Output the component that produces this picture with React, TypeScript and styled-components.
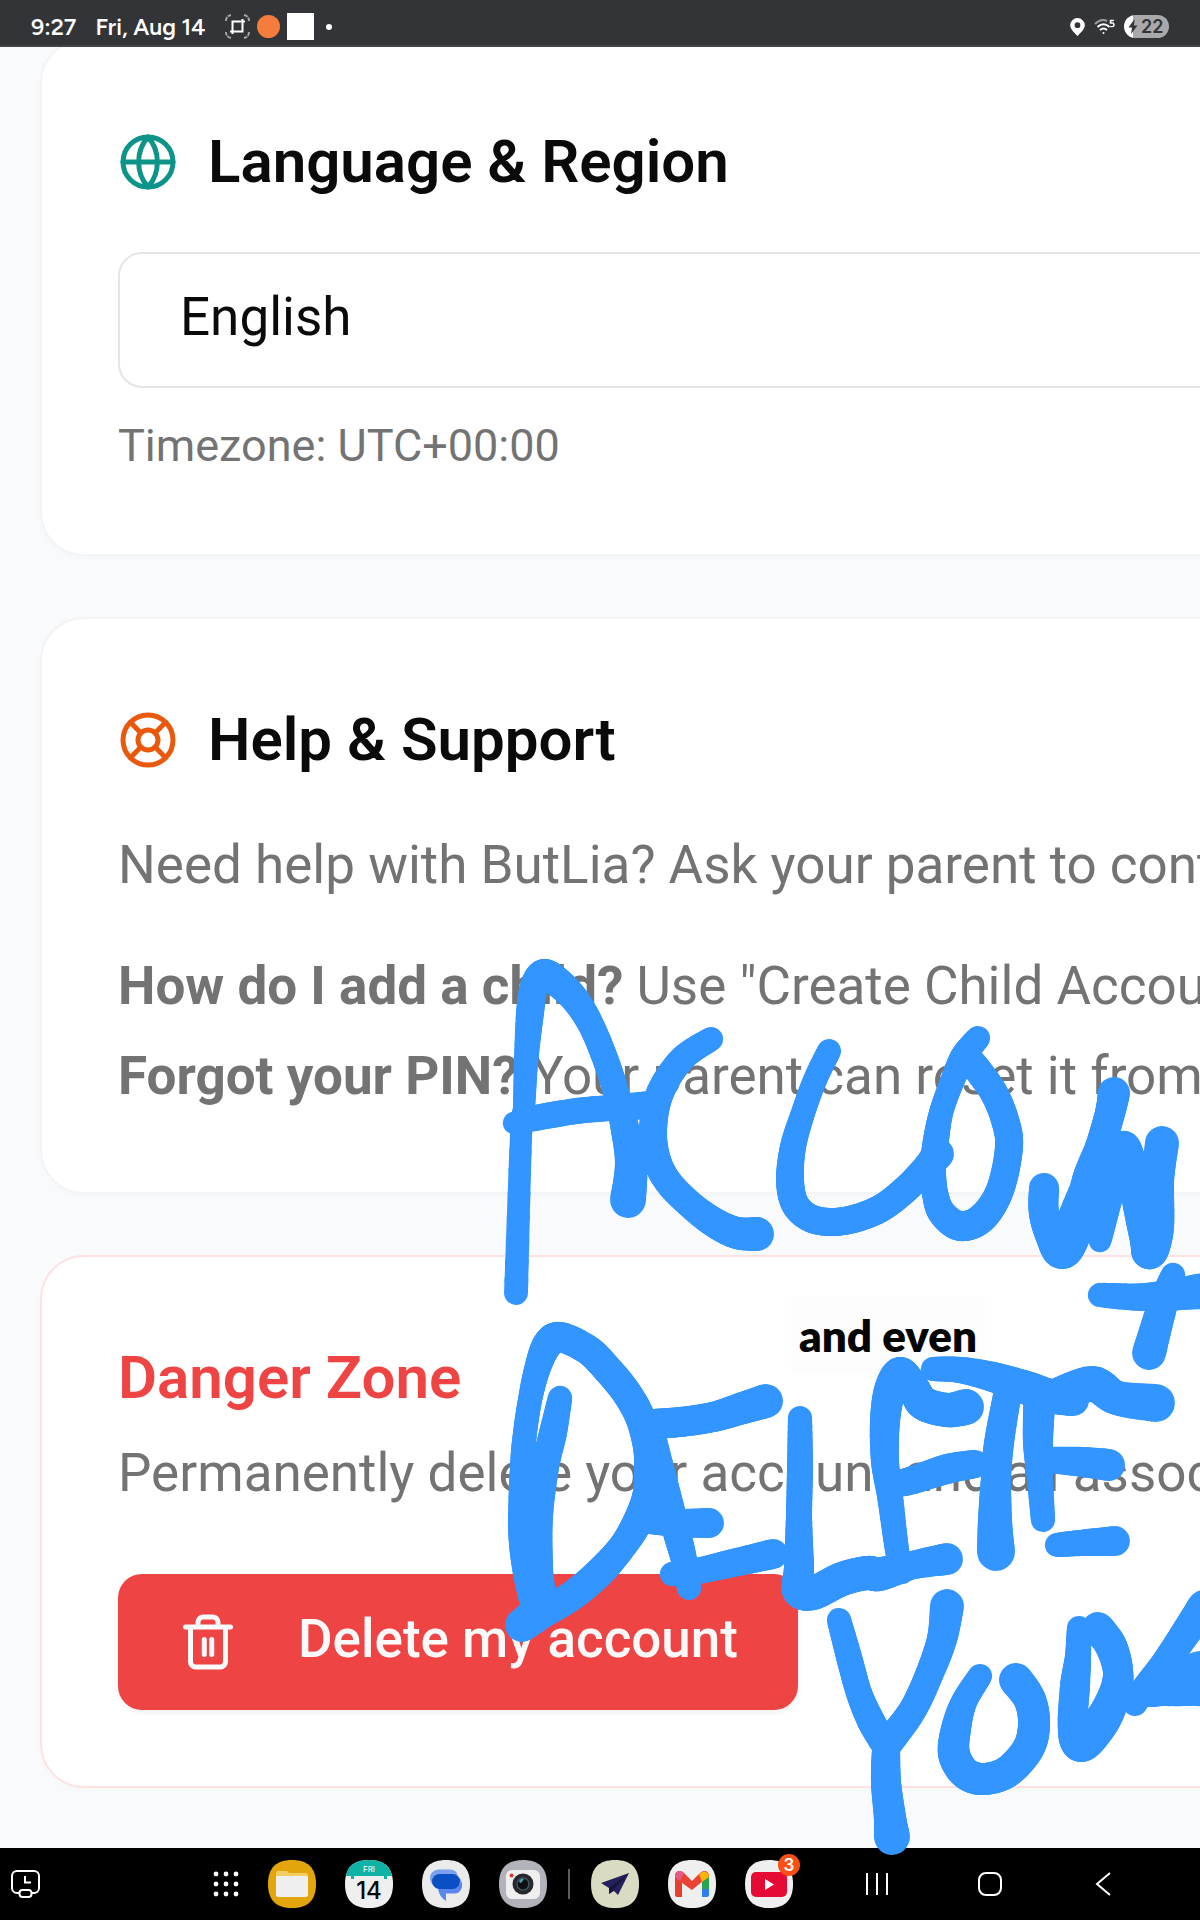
import React from "react";
import styled, { createGlobalStyle } from "styled-components";

const GlobalStyle = createGlobalStyle`
  *, *::before, *::after { box-sizing: border-box; }
  body {
    margin: 0;
    background: #f9fafc;
    color: #0a0a0a;
    font-family: Roboto, "Liberation Sans", sans-serif;
  }
  h2, p { margin: 0; }
`;

const Screen = styled.div`
  position: relative;
  display: flex;
  flex-direction: column;
  min-height: 100vh;
  overflow: hidden;
`;

/* ---------- status bar ---------- */

const StatusBar = styled.header`
  display: flex;
  align-items: center;
  justify-content: space-between;
  height: 47px;
  padding: 8px 31px 0;
  background: #333438;
  border-bottom: 2px solid #434447;
  color: #fff;
  position: relative;
  z-index: 1;
`;

const StatusGroup = styled.div<{ $gap: number }>`
  display: flex;
  align-items: center;
  gap: ${(p) => p.$gap}px;
`;

const StatusText = styled.span`
  font-family: Figtree, Inter, Roboto, sans-serif;
  font-size: 23px;
  line-height: 28px;
  font-weight: 600;
  white-space: nowrap;
`;

const OrangeDot = styled.span`
  width: 23px;
  height: 23px;
  border-radius: 50%;
  background: #f47c3c;
`;

const WhiteSquare = styled.span`
  width: 27px;
  height: 27px;
  background: #fff;
`;

const MoreDot = styled.span`
  width: 6px;
  height: 6px;
  margin-left: 5px;
  border-radius: 50%;
  background: #fff;
`;

const Battery = styled.span`
  display: flex;
  align-items: center;
  gap: 3px;
  height: 23px;
  width: 45px;
  padding-left: 4px;
  border-radius: 12px;
  background: linear-gradient(to right, #fff 9px, #a9a9ac 9px);
  color: #333438;
  font-family: Inter, Roboto, sans-serif;
  font-size: 18px;
  line-height: 23px;
  font-weight: 600;
`;

/* ---------- settings cards ---------- */

const Settings = styled.main`
  flex: 1;
  display: flex;
  flex-direction: column;
  gap: 61px;
  margin-top: -8px;
  margin-right: -120px;
  padding: 0 0 60px 40px;
`;

const Card = styled.section<{ $danger?: boolean }>`
  padding: 76px;
  border: 2px solid ${(p) => (p.$danger ? "#fee2e2" : "#f3f4f6")};
  border-radius: 44px;
  background: #fff;
  box-shadow: 0 2px 6px rgba(0, 0, 0, 0.02);
  white-space: nowrap;
`;

const CardTitle = styled.h2<{ $danger?: boolean }>`
  display: flex;
  align-items: center;
  gap: 30px;
  font-size: 60px;
  line-height: 90px;
  font-weight: 600;
  color: ${(p) => (p.$danger ? "#ef4444" : "#0a0a0a")};
`;

const TitleIcon = styled.svg<{ $color: string }>`
  flex: none;
  width: 60px;
  height: 60px;
  color: ${(p) => p.$color};
`;

const LanguageSelect = styled.select`
  appearance: none;
  display: block;
  width: 100%;
  height: 136px;
  margin: 45px 0 26px;
  padding: 0 60px 6px;
  border: 2px solid #e5e5e5;
  border-radius: 24px;
  background: #fff;
  color: #0a0a0a;
  font-family: inherit;
  font-size: 53px;
  line-height: 80px;
`;

const Hint = styled.p`
  color: #737373;
  font-size: 45px;
  line-height: 64px;
`;

const Body = styled.p<{ $top: number }>`
  margin-top: ${(p) => p.$top}px;
  color: #737373;
  font-size: 53px;
  line-height: 80px;

  strong { font-weight: 700; }
`;

const DeleteButton = styled.button`
  display: flex;
  align-items: center;
  gap: 60px;
  height: 136px;
  margin-top: 61px;
  padding: 0 60px;
  border: 0;
  border-radius: 24px;
  background: #ef4444;
  box-shadow: 0 3px 6px rgba(0, 0, 0, 0.06);
  color: #fafafa;
  font-family: inherit;
  font-size: 53px;
  line-height: 80px;
  font-weight: 500;
`;

const ButtonLabel = styled.span`
  padding-bottom: 6px;
`;

/* ---------- screen annotations ---------- */

const Ink = styled.svg`
  position: absolute;
  z-index: 2;
  top: 0;
  left: 0;
  width: 1200px;
  height: 1920px;
  fill: none;
  stroke: #3395ff;
  stroke-linecap: round;
  pointer-events: none;
`;

const Caption = styled.div`
  position: absolute;
  z-index: 2;
  top: 1296px;
  left: 791px;
  padding: 14px 8px;
  background: #fdfdfd;
  color: #050505;
  font-family: Lato, Roboto, sans-serif;
  font-size: 44px;
  line-height: 50px;
  font-weight: 800;
  white-space: nowrap;
`;

/* ---------- dock ---------- */

const Dock = styled.nav`
  position: relative;
  z-index: 1;
  display: flex;
  align-items: center;
  height: 72px;
  padding: 0 41px 0 10px;
  background: #000;
`;

const Apps = styled.div`
  display: flex;
  align-items: center;
  gap: 29px;
  margin-left: 172px;
`;

const PlainButton = styled.button`
  display: flex;
  align-items: center;
  justify-content: center;
  padding: 0;
  border: 0;
  background: none;
  color: #fff;
`;

const AppButton = styled(PlainButton)`
  position: relative;
  width: 48px;
  height: 48px;
`;

const Divider = styled.span`
  width: 2px;
  height: 30px;
  margin: 0 -8px;
  background: #5c5c5c;
`;

const Badge = styled.span`
  position: absolute;
  top: -6px;
  right: -7px;
  width: 22px;
  height: 22px;
  border-radius: 50%;
  background: #fa5014;
  color: #fff;
  font-family: Inter, Roboto, sans-serif;
  font-size: 17px;
  line-height: 22px;
  font-weight: 600;
  text-align: center;
`;

const Keys = styled.div`
  display: flex;
  margin-left: auto;
`;

const KeyButton = styled(PlainButton)`
  width: 113px;
  height: 48px;
`;

/* ---------- brush drawing ---------- */

type Dab = [x: number, y: number, radius: number];

const mix = (a: number, b: number, c: number, d: number, t: number) =>
  0.5 *
  (2 * b +
    (c - a) * t +
    (2 * a - 5 * b + 4 * c - d) * t * t +
    (3 * b - a - 3 * c + d) * t * t * t);

/* Fills in a smooth run of dabs between those given for a stroke. */
function smooth(dabs: Dab[]): Dab[] {
  const pts: Dab[] = [];
  for (let i = 0; i < dabs.length - 1; i++) {
    const a = dabs[Math.max(0, i - 1)];
    const b = dabs[i];
    const c = dabs[i + 1];
    const d = dabs[Math.min(dabs.length - 1, i + 2)];
    for (let s = 0; s < 8; s++) {
      const t = s / 8;
      pts.push([
        mix(a[0], b[0], c[0], d[0], t),
        mix(a[1], b[1], c[1], d[1], t),
        b[2] + (c[2] - b[2]) * t,
      ]);
    }
  }
  pts.push(dabs[dabs.length - 1]);
  return pts;
}

/* One pen stroke: short round-ended lines whose width follows the pressure. */
const BrushStroke = ({ dabs }: { dabs: Dab[] }) => {
  const pts = smooth(dabs);
  return (
    <g>
      {pts.slice(1).map(([x, y, r], i) => (
        <path
          key={i}
          d={`M${pts[i][0].toFixed(2)} ${pts[i][1].toFixed(2)}L${x.toFixed(2)} ${y.toFixed(2)}`}
          strokeWidth={(pts[i][2] + r).toFixed(2)}
        />
      ))}
    </g>
  );
};

const strokes: Dab[][] = [
  [[516, 1293, 12], [521, 1137, 11], [524, 1107, 11], [526, 1063, 12], [530, 1013, 14], [534, 987, 14], [544, 974, 15], [560, 984, 15], [577, 1002, 14], [592, 1027, 13], [606, 1061, 13], [616, 1092, 13], [624, 1124, 14], [631, 1163, 16], [628, 1200, 18]],
  [[514, 1123, 11], [535, 1118, 13], [577, 1111, 13], [610, 1108, 13], [650, 1105, 14]],
  [[711, 1039, 12], [682, 1059, 13], [660, 1093, 14], [653, 1130, 14], [657, 1160, 14], [669, 1183, 14], [692, 1206, 14], [715, 1223, 15], [737, 1233, 16], [757, 1234, 17]],
  [[829, 1051, 12], [815, 1080, 12], [803, 1113, 12], [793, 1147, 13], [790, 1180, 14], [795, 1204, 14], [810, 1218, 14], [832, 1222, 14], [857, 1218, 14], [883, 1207, 14], [907, 1188, 14], [927, 1167, 14], [938, 1154, 16]],
  [[978, 1038, 12], [963, 1057, 13], [950, 1087, 12], [941, 1113, 12], [936, 1140, 13], [933, 1167, 13], [935, 1193, 13], [942, 1213, 14], [960, 1226, 15], [982, 1218, 15], [1000, 1190, 14], [1009, 1147, 14], [1005, 1120, 14], [994, 1093, 14], [978, 1070, 14], [968, 1056, 12]],
  [[1044, 1188, 15], [1044, 1213, 15], [1053, 1237, 17], [1063, 1250, 19], [1077, 1227, 16], [1087, 1180, 15], [1100, 1147, 15], [1110, 1113, 15], [1114, 1093, 16]],
  [[1063, 1250, 17], [1080, 1200, 15], [1105, 1150, 16]],
  [[1100, 1241, 11], [1107, 1200, 15], [1113, 1167, 17], [1124, 1146, 15], [1133, 1167, 14], [1137, 1200, 15], [1146, 1240, 16], [1150, 1251, 18], [1157, 1227, 17], [1158, 1180, 16], [1162, 1143, 17]],
  [[1100, 1295, 12], [1147, 1297, 14], [1202, 1291, 18]],
  [[1173, 1275, 12], [1162, 1307, 15], [1149, 1353, 17]],
  [[560, 1398, 12], [553, 1433, 14], [545, 1467, 14], [538, 1517, 15], [538, 1567, 15], [540, 1600, 14], [522, 1625, 16]],
  [[533, 1600, 14], [525, 1567, 13], [521, 1527, 13], [522, 1467, 12], [525, 1433, 12], [530, 1400, 12], [537, 1370, 13], [547, 1345, 15], [560, 1337, 15], [588, 1350, 15], [608, 1370, 15], [626, 1392, 15], [640, 1417, 15], [648, 1447, 15], [649, 1473, 15], [647, 1497, 15], [637, 1523, 15], [622, 1547, 14], [600, 1572, 15], [573, 1595, 15], [543, 1613, 15], [522, 1625, 17]],
  [[652, 1433, 13], [665, 1487, 14], [677, 1533, 14], [684, 1560, 13], [689, 1588, 12]],
  [[653, 1424, 15], [680, 1422, 15], [713, 1417, 15], [743, 1408, 16], [766, 1401, 17]],
  [[650, 1521, 13], [680, 1523, 14], [709, 1523, 15]],
  [[672, 1574, 12], [697, 1571, 13], [733, 1563, 14], [773, 1554, 15]],
  [[800, 1418, 12], [800, 1467, 13], [799, 1517, 13], [799, 1567, 15], [798, 1590, 16], [813, 1593, 17], [842, 1579, 17], [867, 1573, 17], [880, 1574, 17], [913, 1565, 14], [947, 1559, 16]],
  [[966, 1407, 18], [947, 1410, 17], [923, 1403, 17], [913, 1386, 15], [900, 1373, 16], [890, 1390, 16], [885, 1421, 15], [885, 1461, 14], [890, 1496, 13], [897, 1550, 12], [902, 1572, 12]],
  [[897, 1484, 13], [913, 1480, 14], [947, 1469, 15], [975, 1464, 14]],
  [[933, 1369, 12], [960, 1370, 13], [993, 1377, 15], [1027, 1388, 17], [1050, 1396, 17], [1073, 1400, 16]],
  [[1007, 1396, 14], [999, 1443, 15], [996, 1479, 15], [995, 1521, 17], [996, 1552, 19]],
  [[1039, 1407, 16], [1038, 1443, 15], [1040, 1479, 13], [1043, 1520, 12]],
  [[1053, 1396, 16], [1092, 1384, 18], [1117, 1398, 17], [1156, 1403, 19]],
  [[1053, 1460, 13], [1083, 1462, 15], [1109, 1465, 16]],
  [[1057, 1545, 12], [1080, 1543, 13], [1115, 1541, 15]],
  [[839, 1620, 12], [849, 1657, 13], [859, 1693, 13], [871, 1721, 14], [884, 1743, 14]],
  [[947, 1606, 17], [942, 1639, 15], [929, 1675, 14], [912, 1711, 14], [888, 1743, 15]],
  [[886, 1750, 14], [886, 1782, 15], [890, 1818, 16], [892, 1837, 18]],
  [[980, 1676, 12], [964, 1702, 13], [956, 1729, 15], [954, 1754, 16], [965, 1773, 16], [983, 1779, 16], [1007, 1772, 16], [1028, 1749, 16], [1034, 1725, 16], [1030, 1700, 16], [1016, 1680, 17]],
  [[1079, 1628, 12], [1078, 1657, 13], [1075, 1686, 15], [1073, 1729, 15], [1082, 1744, 18], [1102, 1721, 18], [1115, 1693, 16], [1118, 1671, 15], [1111, 1646, 16], [1098, 1628, 16]],
  [[1135, 1704, 12], [1144, 1689, 13], [1165, 1663, 14], [1187, 1631, 15], [1204, 1607, 17]],
  [[1144, 1694, 13], [1166, 1690, 15], [1202, 1678, 28]],
];

/* ---------- icons ---------- */

const lineIcon = {
  viewBox: "0 0 24 24",
  fill: "none",
  stroke: "currentColor",
  strokeWidth: 2,
  strokeLinecap: "round" as const,
  strokeLinejoin: "round" as const,
  "aria-hidden": true,
};

const GlobeIcon = () => (
  <TitleIcon {...lineIcon} $color="#0d9488">
    <circle cx="12" cy="12" r="10" />
    <path d="M12 2c-5 5.600-5 14.400 0 20c5-5.600 5-14.400 0-20zM2 12h20" />
  </TitleIcon>
);

const BuoyIcon = () => (
  <TitleIcon {...lineIcon} $color="#ea580c">
    <circle cx="12" cy="12" r="10" />
    <circle cx="12" cy="12" r="4" />
    <path d="m4.930 4.930 4.240 4.240M14.830 9.170l4.240-4.240M14.830 14.830l4.240 4.240M9.170 14.830l-4.240 4.240" />
  </TitleIcon>
);

const TrashIcon = () => (
  <TitleIcon {...lineIcon} $color="#fafafa">
    <path d="M3 6h18M19 6v14c0 1-1 2-2 2H7c-1 0-2-1-2-2V6M8 6V4c0-1 1-2 2-2h4c1 0 2 1 2 2v2M10.500 11v6M13.500 11v6" />
  </TitleIcon>
);

const squircle =
  "M24 0C40 0 48 8 48 24S40 48 24 48S0 40 0 24S8 0 24 0z";

const AppIcon = ({ fill, children }: { fill: string; children: React.ReactNode }) => (
  <svg width="48" height="48" viewBox="0 0 48 48" aria-hidden="true">
    <path d={squircle} fill={fill} />
    {children}
  </svg>
);

const CaptureIcon = () => (
  <svg width="25" height="25" viewBox="0 0 25 25" fill="none" stroke="#fff" strokeWidth="2" aria-hidden="true">
    <path d="M1 7Q1 2 6 1M19 1Q24 2 24 7M24 18Q24 23 19 24M6 24Q1 23 1 18" stroke="#a5a5a8" strokeDasharray="4 1" />
    <path d="M5 17.500h12.500V5M7.500 20V7.500H20" />
  </svg>
);

const PinIcon = () => (
  <svg width="15" height="18" viewBox="0 0 15 18" aria-hidden="true">
    <path fill="#fff" fillRule="evenodd" d="M7.500 0A7.300 7.300 0 0 1 14.800 7.300C14.800 11 11 14.500 7.500 18C4 14.500.2 11 .2 7.300A7.300 7.300 0 0 1 7.500 0zM7.500 4.300a2.900 2.900 0 1 0 0 5.800a2.900 2.900 0 0 0 0-5.800z" />
  </svg>
);

const WifiIcon = () => (
  <svg width="21" height="16" viewBox="0 0 21 16" fill="none" stroke="#fff" strokeWidth="2" aria-hidden="true">
    <path d="M1 5Q7-1 13 2" stroke="#9a9a9d" />
    <path d="M3.500 8Q9.500 2.500 15.500 8M6 11Q9.500 8 13 11" />
    <circle cx="9.500" cy="14" r="1" fill="#fff" stroke="none" />
    <path d="M20 1.500h-3.500v2.500q3.500-.5 3.500 1.800t-3.800 1.700" strokeWidth="1.500" />
  </svg>
);

const BoltIcon = () => (
  <svg width="10" height="15" viewBox="0 0 10 15" aria-hidden="true">
    <path d="M6.500 0L.5 8.500h3.500L3 15l6.500-8.500H6z" fill="#333438" />
  </svg>
);

const CalendarDay = styled.text`
  font-family: Inter, Roboto, sans-serif;
  text-anchor: middle;
`;

export default function App() {
  return (
    <>
      <GlobalStyle />
      <Screen>
        <StatusBar>
          <StatusGroup $gap={19}>
            <StatusText>9:27</StatusText>
            <StatusText>Fri, Aug 14</StatusText>
            <StatusGroup $gap={7}>
              <CaptureIcon />
              <OrangeDot />
              <WhiteSquare />
              <MoreDot />
            </StatusGroup>
          </StatusGroup>
          <StatusGroup $gap={9}>
            <PinIcon />
            <WifiIcon />
            <Battery>
              <BoltIcon />
              22
            </Battery>
          </StatusGroup>
        </StatusBar>

        <Settings>
          <Card>
            <CardTitle>
              <GlobeIcon />
              <label htmlFor="language">Language &amp; Region</label>
            </CardTitle>
            <LanguageSelect id="language" defaultValue="en">
              <option value="en">English</option>
            </LanguageSelect>
            <Hint>Timezone: UTC+00:00</Hint>
          </Card>

          <Card>
            <CardTitle>
              <BuoyIcon />
              Help &amp; Support
            </CardTitle>
            <Body $top={40}>Need help with ButLia? Ask your parent to contact</Body>
            <Body $top={41}>
              <strong>How do I add a child?</strong> Use "Create Child Account"
            </Body>
            <Body $top={10}>
              <strong>Forgot your PIN?</strong> Your parent can reset it from
            </Body>
          </Card>

          <Card $danger>
            <CardTitle $danger>Danger Zone</CardTitle>
            <Body $top={10}>Permanently delete your account and all associated</Body>
            <DeleteButton type="button">
              <TrashIcon />
              <ButtonLabel>Delete my account</ButtonLabel>
            </DeleteButton>
          </Card>
        </Settings>

        <Dock>
          <PlainButton type="button" aria-label="Recent activity">
            <svg width="31" height="30" viewBox="0 0 31 30" fill="none" stroke="#fff" strokeWidth="2" aria-hidden="true">
              <path d="M9 24H7a5 5 0 0 1-5-5V7a5 5 0 0 1 5-5h17a5 5 0 0 1 5 5v12a5 5 0 0 1-5 5h-2" />
              <rect x="9.500" y="21" width="12" height="7" rx="3" />
              <path d="M15 7v6.500h6" />
            </svg>
          </PlainButton>
          <Apps>
            <PlainButton type="button" aria-label="All apps">
              <svg width="26" height="26" viewBox="0 0 26 26" fill="#fff" aria-hidden="true">
                {[3, 13, 23].map((y) => [3, 13, 23].map((x) => <circle key={`${x}-${y}`} cx={x} cy={y} r="2.400" />))}
              </svg>
            </PlainButton>
            <AppButton type="button" aria-label="Files">
              <AppIcon fill="#e2a50c">
                <path d="M8 15v-2q0-2 2-2h9l2 2h17q2 0 2 2v6H8z" fill="#f2cd62" />
                <rect x="8" y="16" width="32" height="21" rx="2" fill="#efefef" />
              </AppIcon>
            </AppButton>
            <AppButton type="button" aria-label="Calendar">
              <AppIcon fill="#efefef">
                <path d="M1 16C3 5 10 0 24 0S45 5 47 16h-5v3h-3v-3H9v3H6v-3z" fill="#0fb3a6" />
                <CalendarDay x="24" y="12" fontSize="8" fill="#fff">FRI</CalendarDay>
                <CalendarDay x="24" y="39" fontSize="24" fontWeight="500" fill="#0a0a0a">14</CalendarDay>
              </AppIcon>
            </AppButton>
            <AppButton type="button" aria-label="Messages">
              <AppIcon fill="#ebebeb">
                <path d="M16 9.500h12q7 0 8 7q4 3 4 8t-4 7q-3 2-12 1.500l0 8q-7-4-8-13q-8-3-8-10t8-8.500z" fill="#7ba0f0" />
                <path d="M17 26h19l4-4q1 11-7 11.500h-9v7q-7-4-8-13z" fill="#5b86ee" />
                <rect x="10" y="14" width="28" height="15" rx="7.500" fill="#0b4fc4" />
              </AppIcon>
            </AppButton>
            <AppButton type="button" aria-label="Camera">
              <AppIcon fill="#b1b2ba">
                <rect x="7" y="10" width="34" height="29" rx="6" fill="#efefef" />
                <circle cx="24" cy="24" r="10.500" fill="#26282b" />
                <circle cx="24" cy="24" r="6" fill="#0c0e12" stroke="#41525c" strokeWidth="1.500" />
                <path d="M20 22q1-4 5-3l-3 4z" fill="#48a0b5" />
                <circle cx="12.500" cy="15.500" r="2" fill="#e03434" />
              </AppIcon>
            </AppButton>
            <Divider />
            <AppButton type="button" aria-label="Mail plane">
              <AppIcon fill="#dadbc3">
                <path d="M38 13L10 23l8 5v6l5-3l4 4z" fill="#25215c" />
                <path d="M38 13L18 28v6l4-4z" fill="#17143f" />
              </AppIcon>
            </AppButton>
            <AppButton type="button" aria-label="Gmail">
              <AppIcon fill="#efefef">
                <path d="M7 16v19q0 2 2 2h5V20z" fill="#e5402f" />
                <path d="M34 20v17h5q2 0 2-2V16z" fill="#2f7df0" />
                <path d="M34 20v9h7V15z" fill="#28a452" />
                <path d="M7 16q0-5 5-5q2 0 4 2l8 8l8-8q2-2 4-2q5 0 5 5l-17 14L7 18z" fill="#ea4335" />
                <path d="M31 14l3-2q7-1 7 5l-7 5z" fill="#f7b50c" />
                <path d="M7 16q0-5 5-5q2 0 4 2l-4 8l-5-4z" fill="#e85a86" />
              </AppIcon>
            </AppButton>
            <AppButton type="button" aria-label="YouTube, 3 notifications">
              <AppIcon fill="#efefef">
                <rect x="6" y="12" width="36" height="25" rx="5" fill="#e60b34" />
                <path d="M20 19v11l9-5.500z" fill="#fff" />
              </AppIcon>
              <Badge>3</Badge>
            </AppButton>
          </Apps>
          <Keys>
            <KeyButton type="button" aria-label="Recents">
              <svg width="24" height="24" viewBox="0 0 24 24" stroke="#fff" strokeWidth="2" aria-hidden="true">
                <path d="M2 1v22M12 1v22M22 1v22" />
              </svg>
            </KeyButton>
            <KeyButton type="button" aria-label="Home">
              <svg width="26" height="26" viewBox="0 0 26 26" fill="none" stroke="#fff" strokeWidth="2" aria-hidden="true">
                <rect x="2" y="2" width="22" height="22" rx="7" />
              </svg>
            </KeyButton>
            <KeyButton type="button" aria-label="Back">
              <svg width="16" height="26" viewBox="0 0 16 26" fill="none" stroke="#fff" strokeWidth="2" aria-hidden="true">
                <path d="M15 2L2 13l13 11" />
              </svg>
            </KeyButton>
          </Keys>
        </Dock>

        <Caption>and even</Caption>
        <Ink viewBox="0 0 1200 1920" aria-hidden="true">
          {strokes.map((dabs, i) => (
            <BrushStroke key={i} dabs={dabs} />
          ))}
        </Ink>
      </Screen>
    </>
  );
}
